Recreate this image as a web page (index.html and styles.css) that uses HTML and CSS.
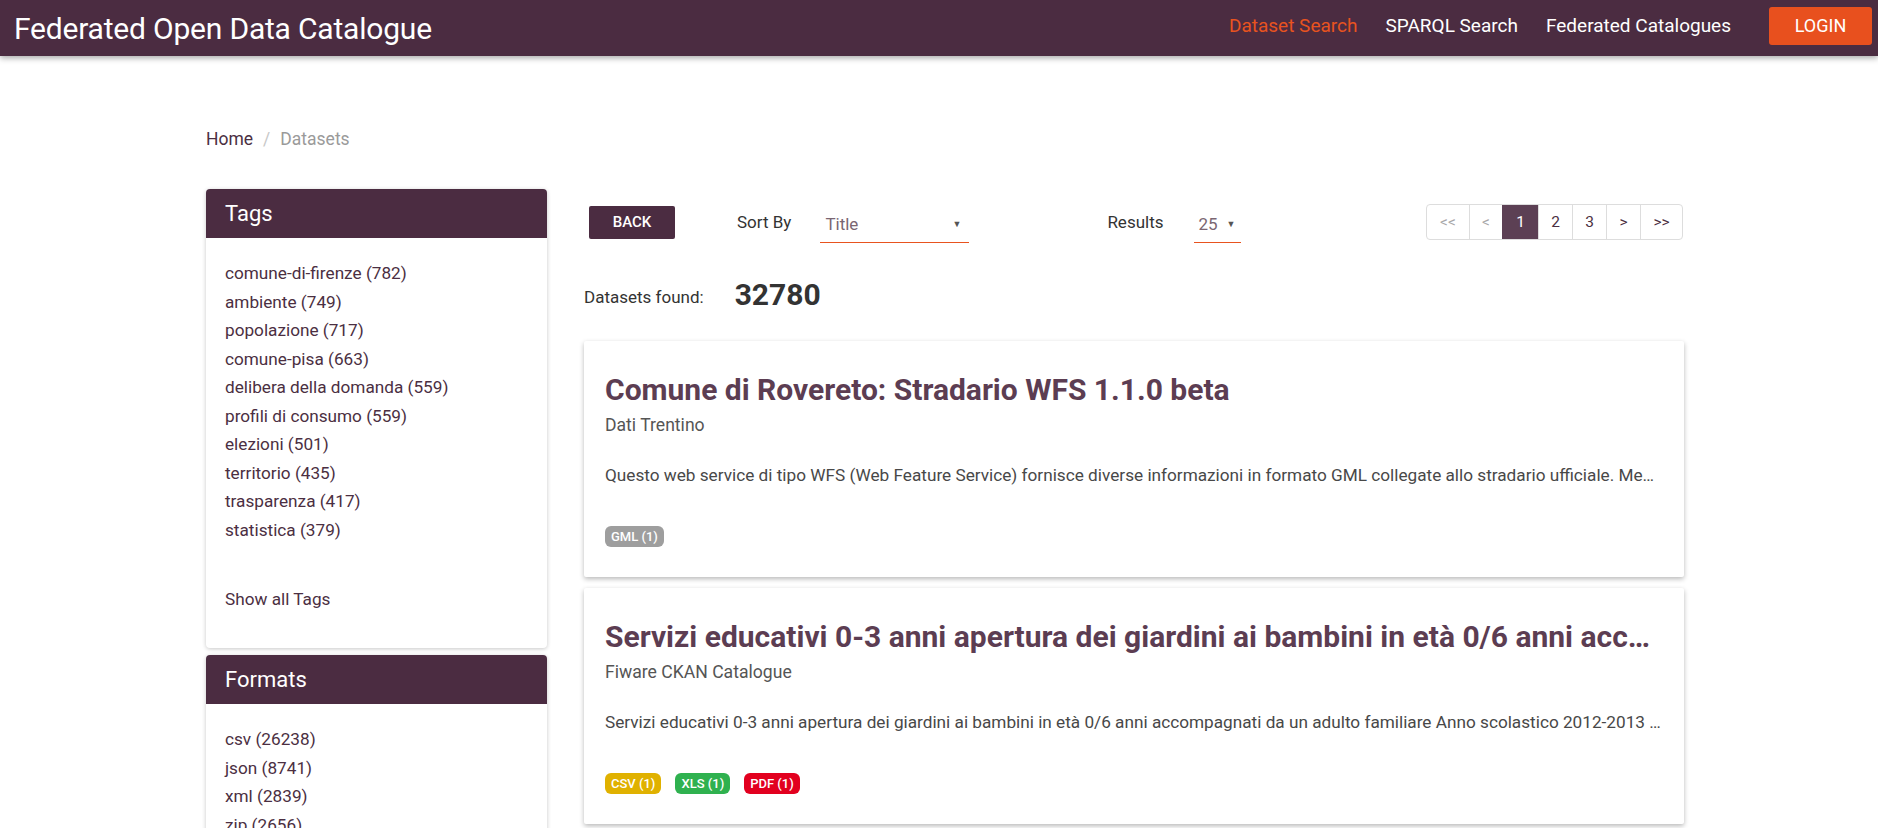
FILE: index.html
```html
<!DOCTYPE html>
<html lang="it">
<head>
<meta charset="utf-8">
<title>Federated Open Data Catalogue</title>
<link rel="stylesheet" href="styles.css">
</head>
<body>
<header class="topbar">
  <div class="brand">Federated Open Data Catalogue</div>
  <nav class="nav">
    <a class="nav-link active">Dataset Search</a>
    <a class="nav-link">SPARQL Search</a>
    <a class="nav-link">Federated Catalogues</a>
    <button class="login">LOGIN</button>
  </nav>
</header>

<div class="page">
  <div class="breadcrumb">
    <span class="crumb">Home</span>
    <span class="sep">/</span>
    <span class="crumb current">Datasets</span>
  </div>

  <div class="layout">
    <aside class="sidebar">
      <section class="facet">
        <h2 class="facet-head">Tags</h2>
        <div class="facet-body">
          <ul class="facet-list">
            <li>comune-di-firenze (782)</li>
            <li>ambiente (749)</li>
            <li>popolazione (717)</li>
            <li>comune-pisa (663)</li>
            <li>delibera della domanda (559)</li>
            <li>profili di consumo (559)</li>
            <li>elezioni (501)</li>
            <li>territorio (435)</li>
            <li>trasparenza (417)</li>
            <li>statistica (379)</li>
          </ul>
          <div class="show-all">Show all Tags</div>
        </div>
      </section>
      <section class="facet">
        <h2 class="facet-head">Formats</h2>
        <div class="facet-body">
          <ul class="facet-list">
            <li>csv (26238)</li>
            <li>json (8741)</li>
            <li>xml (2839)</li>
            <li>zip (2656)</li>
            <li>pdf (2201)</li>
          </ul>
        </div>
      </section>
    </aside>

    <main class="results">
      <div class="toolbar">
        <button class="back">BACK</button>
        <span class="label sort-label">Sort By</span>
        <div class="select select-sort"><span>Title</span><span class="caret">&#9660;</span></div>
        <span class="label results-label">Results</span>
        <div class="select select-num"><span>25</span><span class="caret">&#9660;</span></div>
        <ul class="pager">
          <li class="disabled">&lt;&lt;</li>
          <li class="disabled">&lt;</li>
          <li class="current">1</li>
          <li>2</li>
          <li>3</li>
          <li>&gt;</li>
          <li>&gt;&gt;</li>
        </ul>
      </div>

      <div class="found">
        <span class="found-label">Datasets found:</span>
        <span class="found-num">32780</span>
      </div>

      <article class="card">
        <h3 class="card-title">Comune di Rovereto: Stradario WFS 1.1.0 beta</h3>
        <div class="card-source">Dati Trentino</div>
        <p class="card-desc">Questo web service di tipo WFS (Web Feature Service) fornisce diverse informazioni in formato GML collegate allo stradario ufficiale. Mediante il servizio è possibile interrogare le vie</p>
        <div class="badges">
          <span class="badge gray">GML (1)</span>
        </div>
      </article>

      <article class="card">
        <h3 class="card-title">Servizi educativi 0-3 anni apertura dei giardini ai bambini in età 0/6 anni accompagnati da un adulto familiare</h3>
        <div class="card-source">Fiware CKAN Catalogue</div>
        <p class="card-desc">Servizi educativi 0-3 anni apertura dei giardini ai bambini in età 0/6 anni accompagnati da un adulto familiare Anno scolastico 2012-2013 Comune di Firenze</p>
        <div class="badges">
          <span class="badge yellow">CSV (1)</span>
          <span class="badge green">XLS (1)</span>
          <span class="badge red">PDF (1)</span>
        </div>
      </article>
    </main>
  </div>
</div>
</body>
</html>
```

FILE: styles.css
```css
* { box-sizing: border-box; }

html, body {
  margin: 0;
  padding: 0;
  background: #ffffff;
  font-family: Roboto, "Liberation Sans", sans-serif;
  color: #4b2f42;
  overflow: hidden;
}

.topbar {
  height: 56px;
  background: #4b2c41;
  display: flex;
  align-items: center;
  justify-content: space-between;
  padding: 0 6px 0 14px;
  box-shadow: 0 2px 6px rgba(0, 0, 0, 0.35);
  position: relative;
  z-index: 2;
}

.brand {
  color: #ffffff;
  font-size: 30px;
  font-weight: 400;
  letter-spacing: -0.2px;
}

.nav {
  display: flex;
  align-items: center;
  margin-bottom: 6px;
}

.nav-link {
  color: #ffffff;
  font-size: 19px;
  margin-right: 28px;
}

.nav-link:nth-child(3) { margin-right: 38px; }

.nav-link.active { color: #e8531f; }

.login {
  width: 103px;
  height: 38px;
  border: 0;
  border-radius: 3px;
  background: #e8501e;
  color: #ffffff;
  font-family: Roboto, "Liberation Sans", sans-serif;
  font-size: 18px;
  margin-top: 1px;
}

.page {
  width: 1478px;
  margin-left: 206px;
}

.breadcrumb {
  margin-top: 71px;
  height: 24px;
  line-height: 24px;
  font-size: 17.5px;
  display: flex;
  gap: 10px;
}

.crumb { color: #4b2f42; }
.crumb.current { color: #9a9a9a; }
.sep { color: #c8c8c8; }

.layout {
  display: flex;
  margin-top: 38px;
  gap: 37px;
}

.sidebar {
  width: 341px;
  flex: none;
  display: flex;
  flex-direction: column;
  gap: 7px;
}

.facet {
  background: #ffffff;
  border-radius: 4px;
  overflow: hidden;
  box-shadow: 0 1px 4px rgba(0, 0, 0, 0.22);
}

.facet-head {
  margin: 0;
  height: 49px;
  line-height: 49px;
  background: #4b2c41;
  color: #ffffff;
  font-size: 22px;
  font-weight: 400;
  padding-left: 19px;
}

.facet-body {
  padding: 21px 19px 35px 19px;
}

.facet-list {
  list-style: none;
  margin: 0;
  padding: 0;
  font-size: 17.2px;
  line-height: 28.5px;
  color: #4b2f42;
}

.show-all {
  margin-top: 41px;
  font-size: 17.2px;
  line-height: 28px;
  color: #4b2f42;
}

.results {
  flex: 1;
  min-width: 0;
  padding-top: 15px;
}

.toolbar {
  display: flex;
  align-items: center;
  height: 36px;
}

.back {
  margin-left: 5px;
  width: 86px;
  height: 33px;
  border: 0;
  border-radius: 2px;
  background: #4b2c41;
  color: #ffffff;
  font-family: Roboto, "Liberation Sans", sans-serif;
  font-size: 15px;
  font-weight: 500;
}

.label {
  font-size: 17px;
  color: #333333;
}

.sort-label { margin-left: 62px; }

.results-label { margin-left: 138px; }

.select {
  display: flex;
  align-items: center;
  justify-content: space-between;
  height: 38px;
  margin-top: 4px;
  border-bottom: 1px solid #e8531f;
  font-size: 17px;
  color: #7a6672;
  padding: 0 5px;
}

.select-sort {
  width: 149px;
  margin-left: 29px;
}

.select-num {
  width: 47px;
  margin-left: 30px;
}

.caret {
  font-size: 9px;
  color: #555555;
}

.select-sort .caret { margin-right: 3px; }

.pager {
  list-style: none;
  margin: 0 1px 0 auto;
  padding: 0;
  display: flex;
  border: 1px solid #dddddd;
  border-radius: 4px;
  overflow: hidden;
  height: 36px;
}

.pager li {
  display: flex;
  align-items: center;
  justify-content: center;
  height: 34px;
  font-size: 15.5px;
  color: #4b2f42;
  border-left: 1px solid #dddddd;
  width: 34px;
}

.pager li:first-child {
  border-left: 0;
  width: 42px;
}

.pager li:nth-child(2) { width: 33px; }
.pager li:last-child { width: 42px; }

.pager li.disabled { color: #a8a8a8; }

.pager li.current {
  background: #5c4054;
  color: #ffffff;
  border-left-color: #5c4054;
  width: 36px;
}

.found {
  display: flex;
  align-items: center;
  margin-top: 34px;
  height: 40px;
}

.found-label {
  font-size: 17px;
  color: #333333;
  margin-top: 6px;
}

.found-num {
  margin-left: 31px;
  font-size: 30px;
  font-weight: 700;
  color: #333333;
}

.found + .card { margin-top: 27px; }

.card {
  background: #ffffff;
  box-shadow: 0 2px 5px rgba(0, 0, 0, 0.28);
  border-radius: 2px;
  padding: 32px 21px 30px 21px;
  margin-bottom: 11px;
}

.card-title {
  margin: 0;
  font-size: 30px;
  line-height: 34px;
  font-weight: 700;
  color: #5c3d52;
  white-space: nowrap;
  overflow: hidden;
  text-overflow: ellipsis;
}

.card-source {
  margin-top: 6px;
  font-size: 17.6px;
  line-height: 24px;
  color: #555555;
}

.card-desc {
  margin: 26px 0 0 0;
  font-size: 17.2px;
  line-height: 24px;
  color: #484848;
  white-space: nowrap;
  overflow: hidden;
  text-overflow: ellipsis;
}

.badges {
  margin-top: 39px;
  display: flex;
  gap: 14px;
}

.badge {
  display: inline-flex;
  align-items: center;
  height: 21px;
  padding: 0 6px;
  border-radius: 6px;
  font-size: 13px;
  font-weight: 500;
  color: #ffffff;
}

.badge.gray { background: #9e9e9e; }
.badge.yellow { background: #e0b100; }
.badge.green { background: #2fb14f; }
.badge.red { background: #e2001f; }
```
